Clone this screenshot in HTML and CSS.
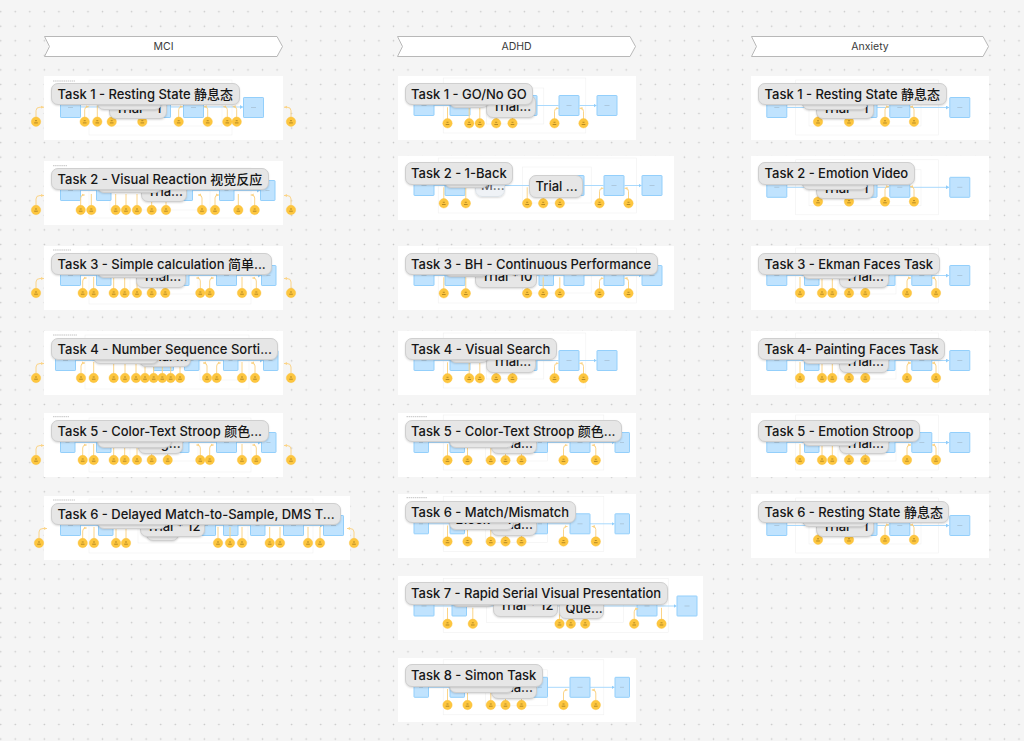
FILE: index.html
```html
<!DOCTYPE html>
<html lang="en">
<head>
<meta charset="utf-8">
<title>Task flows</title>
<link rel="stylesheet" href="styles.css">
</head>
<body>
<svg class="defs" width="0" height="0" aria-hidden="true">
  <defs>
    <marker id="ah" markerWidth="4" markerHeight="4" refX="3" refY="2" orient="auto"><path d="M0 0L3 2L0 4z" fill="#8fcdfb"/></marker>
    <marker id="ao" markerWidth="4" markerHeight="4" refX="3" refY="2" orient="auto"><path d="M0 .6L3 2L0 3.4z" fill="#fbd488"/></marker>
    <g id="B"><rect class="box" x=".5" y=".5" width="20" height="20" rx=".6"/><path class="mark" d="M8 10.500h5"/></g>
    <g id="N"><rect class="box" x=".5" y=".5" width="14.500" height="20" rx=".6"/><path class="mark" d="M5.500 10.500h4"/></g>
    <g id="face"><circle class="dot" r="4.700"/><path class="fmark" d="M-1 -1h2M-1.800 1.200h3.600"/></g>
    <g id="s"><path class="wire" d="M0 -4V-16"/><use href="#face"/></g>
    <g id="r"><path class="wire" d="M0 -4V-12Q0 -15 3 -15H4" marker-end="url(#ao)"/><use href="#face"/></g>
    <g id="l"><path class="wire" d="M0 -4V-12Q0 -15 -3 -15H-4" marker-end="url(#ao)"/><use href="#face"/></g>
    <g id="ol"><path class="wire" d="M0 -4V-11Q0 -14.500 4 -14.500H8" marker-end="url(#ao)"/><use href="#face"/></g>
    <g id="or"><path class="wire" d="M0 -4V-11Q0 -14.500 -4 -14.500H-7" marker-end="url(#ao)"/><use href="#face"/></g>

    <g id="adhd-a">
      <rect class="frame" x="442.700" y="-17" width="142.600" height="55"/>
      <rect class="frame" x="486" y="-7" width="57.300" height="36"/>
      <path class="edge" d="M433 10.500H558"/><path class="edge" d="M579 10.500H596" marker-end="url(#ah)"/>
      <use href="#B" x="413"/><use href="#B" x="449"/><use href="#B" x="516"/><use href="#B" x="558"/><use href="#B" x="596"/>
      <use href="#s" x="447" y="28.300"/><use href="#s" x="468.700" y="28.300"/><use href="#s" x="479.300" y="28.300"/><use href="#s" x="495.700" y="28.300"/><use href="#s" x="512" y="28.300"/><use href="#r" x="554" y="28.300"/><use href="#l" x="583" y="28.300"/>
    </g>
    <g id="adhd-b">
      <rect class="frame" x="442.700" y="-17" width="160.600" height="55"/>
      <rect class="frame" x="485" y="-7" width="62" height="36"/>
      <path class="edge" d="M428 10.500H569"/><path class="edge" d="M589 10.500H614" marker-end="url(#ah)"/>
      <use href="#N" x="413"/><use href="#N" x="449"/><use href="#N" x="532"/><use href="#B" x="569"/><use href="#N" x="614"/>
      <use href="#s" x="447" y="28.200"/><use href="#s" x="467" y="28.200"/><use href="#s" x="490.300" y="28.200"/><use href="#s" x="505" y="28.200"/><use href="#s" x="521" y="28.200"/><use href="#r" x="563" y="28.200"/><use href="#l" x="595.300" y="28.200"/>
    </g>
    <g id="adhd-c">
      <rect class="frame" x="437.700" y="-17" width="198.300" height="55"/>
      <rect class="frame" x="522" y="-8" width="68.700" height="36"/>
      <path class="edge" d="M433 10.500H603"/><path class="edge" d="M624 10.500H641" marker-end="url(#ah)"/>
      <use href="#B" x="413"/><use href="#B" x="444"/><use href="#N" x="538"/><use href="#B" x="563"/><use href="#B" x="603"/><use href="#B" x="641"/>
      <use href="#s" x="443.300" y="28.300"/><use href="#s" x="465.300" y="28.300"/><use href="#s" x="526.700" y="28.300"/><use href="#s" x="542.700" y="28.300"/><use href="#s" x="559.300" y="28.300"/><use href="#r" x="599" y="28.300"/><use href="#l" x="628" y="28.300"/>
    </g>
    <g id="anx-x">
      <rect class="frame" x="795.700" y="-17" width="142.600" height="55"/>
      <rect class="frame" x="809" y="-7" width="112" height="36"/>
      <path class="edge" d="M787 10.500H889"/><path class="edge" d="M910 10.500H949" marker-end="url(#ah)"/>
      <use href="#B" x="766.300"/><use href="#B" x="856.500"/><use href="#B" x="889.300"/><use href="#B" x="949.300"/>
      <use href="#s" x="818" y="24.800"/><use href="#s" x="849" y="24.800"/><use href="#r" x="885" y="24.800"/><use href="#l" x="914" y="24.800"/>
    </g>
    <g id="anx-y">
      <rect class="frame" x="795.700" y="-17" width="142.600" height="55"/>
      <rect class="frame" x="838" y="-7" width="58" height="36"/>
      <path class="edge" d="M787 10.500H911"/><path class="edge" d="M931 10.500H949" marker-end="url(#ah)"/>
      <use href="#B" x="766.300"/><use href="#N" x="804"/><use href="#N" x="880"/><use href="#B" x="911.300"/><use href="#B" x="949.300"/>
      <use href="#s" x="800" y="28"/><use href="#s" x="822" y="28"/><use href="#s" x="832.300" y="28"/><use href="#s" x="849" y="28"/><use href="#s" x="865.300" y="28"/><use href="#r" x="907" y="28"/><use href="#l" x="936" y="28"/>
    </g>
  </defs>
</svg>

<main class="canvas">

  <div class="tag" style="left:44px;width:239px"><svg class="chevron" viewBox="0 0 239 21" preserveAspectRatio="none"><polygon points=".5,.5 233,.5 238.500,10.500 233,20.500 .5,20.500 5.500,10.500"/></svg><span class="tag-text">MCI</span></div>
  <div class="tag" style="left:397px;width:239px"><svg class="chevron" viewBox="0 0 239 21" preserveAspectRatio="none"><polygon points=".5,.5 233,.5 238.500,10.500 233,20.500 .5,20.500 5.500,10.500"/></svg><span class="tag-text">ADHD</span></div>
  <div class="tag" style="left:751px;width:238px"><svg class="chevron" viewBox="0 0 239 21" preserveAspectRatio="none"><polygon points=".5,.5 233,.5 238.500,10.500 233,20.500 .5,20.500 5.500,10.500"/></svg><span class="tag-text">Anxiety</span></div>

  <!-- MCI -->
  <section class="card" style="left:44px;top:76px;width:239px">
    <svg class="flow" viewBox="44 76 239 64">
      <path class="title" d="M53 81h22"/>
      <rect class="frame" x="89" y="80" width="143" height="55"/><rect class="frame" x="110" y="90" width="112" height="36"/>
      <path class="edge" d="M81 107H243" marker-end="url(#ah)"/>
      <use href="#B" x="60" y="97"/><use href="#B" x="150" y="97"/><use href="#B" x="183" y="97"/><use href="#B" x="243" y="97"/>
      <use href="#ol" x="36" y="121.700"/><use href="#r" x="84.700" y="121.700"/><use href="#s" x="97.300" y="121.700"/><use href="#s" x="111.700" y="121.700"/><use href="#s" x="142.300" y="121.700"/><use href="#r" x="178.700" y="121.700"/><use href="#l" x="207.700" y="121.700"/><use href="#l" x="227.300" y="121.700"/><use href="#l" x="236.700" y="121.700"/><use href="#or" x="291" y="121.700"/>
    </svg>
    <span class="label" style="left:65px;top:20.500px;width:58px">Trial * 1</span>
    <span class="label" style="left:53px;top:11.500px;width:65px">Block * 1</span>
    <span class="label task">Task 1 - Resting State 静息态</span>
  </section>

  <section class="card" style="left:44px;top:161px;width:239px">
    <svg class="flow" viewBox="44 161 239 64">
      <path class="title" d="M53 165.700h14"/>
      <rect class="frame" x="89" y="168" width="162" height="50"/><rect class="frame" x="110" y="176" width="100" height="34"/>
      <path class="edge" d="M81 190.500H260" marker-end="url(#ah)"/>
      <use href="#B" x="60" y="180"/><use href="#N" x="96" y="180"/><use href="#B" x="172" y="180"/><use href="#N" x="219" y="180"/><use href="#N" x="260" y="180"/>
      <use href="#ol" x="36" y="210"/><use href="#r" x="80.700" y="210"/><use href="#s" x="91.300" y="210"/><use href="#s" x="115.700" y="210"/><use href="#s" x="126" y="210"/><use href="#s" x="137" y="210"/><use href="#s" x="151.700" y="210"/><use href="#s" x="166" y="210"/><use href="#l" x="202" y="210"/><use href="#r" x="215" y="210"/><use href="#s" x="238.300" y="210"/><use href="#l" x="254.700" y="210"/><use href="#or" x="291" y="210"/>
    </svg>
    <span class="label" style="left:97px;top:18.500px;width:46px">Tria...</span>
    <span class="label" style="left:53px;top:9.500px;width:65px">Block * 1</span>
    <span class="label task">Task 2 - Visual Reaction 视觉反应</span>
  </section>

  <section class="card" style="left:44px;top:246px;width:239px">
    <svg class="flow" viewBox="44 246 239 64">
      <path class="title" d="M53 250h18"/>
      <rect class="frame" x="89" y="250" width="162" height="54"/><rect class="frame" x="130" y="258" width="68" height="36"/>
      <path class="edge" d="M81 275.500H261" marker-end="url(#ah)"/>
      <use href="#B" x="60" y="265"/><use href="#N" x="96" y="265"/><use href="#N" x="174" y="265"/><use href="#B" x="216" y="265"/><use href="#N" x="261" y="265"/>
      <use href="#ol" x="36" y="293"/><use href="#r" x="82.700" y="293"/><use href="#s" x="93.700" y="293"/><use href="#s" x="113.700" y="293"/><use href="#s" x="124.700" y="293"/><use href="#s" x="137" y="293"/><use href="#s" x="151.700" y="293"/><use href="#s" x="165.300" y="293"/><use href="#l" x="200.300" y="293"/><use href="#r" x="209.700" y="293"/><use href="#s" x="242" y="293"/><use href="#l" x="256.300" y="293"/><use href="#or" x="291" y="293"/>
    </svg>
    <span class="label" style="left:92px;top:19px;width:50px">Trial...</span>
    <span class="label" style="left:53px;top:9.500px;width:70px">Block * 1</span>
    <span class="label task">Task 3 - Simple calculation 简单...</span>
  </section>

  <section class="card" style="left:44px;top:331px;width:239px">
    <svg class="flow" viewBox="44 331 239 64">
      <path class="title" d="M53 335h24"/>
      <rect class="frame" x="85" y="335" width="164" height="54"/><rect class="frame" x="200" y="345" width="40" height="35"/>
      <path class="edge" d="M75 360.500H263" marker-end="url(#ah)"/>
      <use href="#B" x="55" y="350"/><use href="#B" x="153" y="350"/><use href="#N" x="184" y="350"/><use href="#N" x="223" y="350"/><use href="#N" x="263" y="350"/>
      <use href="#ol" x="36" y="378"/><use href="#r" x="81" y="378"/><use href="#s" x="93.700" y="378"/><use href="#s" x="113.700" y="378"/><use href="#s" x="125" y="378"/><use href="#s" x="136" y="378"/><use href="#s" x="145" y="378"/><use href="#s" x="153.700" y="378"/><use href="#s" x="162.300" y="378"/><use href="#s" x="170.700" y="378"/><use href="#s" x="180" y="378"/><use href="#l" x="207" y="378"/><use href="#r" x="216.700" y="378"/><use href="#s" x="242" y="378"/><use href="#l" x="255" y="378"/><use href="#or" x="291" y="378"/>
    </svg>
    <span class="label" style="left:95px;top:13.800px;width:52px">Trial ...</span>
    <span class="label" style="left:49px;top:10px;width:66px">Block * 1</span>
    <span class="label task">Task 4 - Number Sequence Sorti...</span>
  </section>

  <section class="card" style="left:44px;top:413px;width:239px">
    <svg class="flow" viewBox="44 413 239 64">
      <path class="title" d="M53 416.700h16"/>
      <rect class="frame" x="89" y="418" width="162" height="54"/><rect class="frame" x="130" y="425" width="68" height="36"/>
      <path class="edge" d="M75 442.500H261" marker-end="url(#ah)"/>
      <use href="#N" x="60" y="432"/><use href="#N" x="96" y="432"/><use href="#N" x="174" y="432"/><use href="#B" x="216" y="432"/><use href="#N" x="261" y="432"/>
      <use href="#ol" x="36" y="460"/><use href="#r" x="82.700" y="460"/><use href="#s" x="93.700" y="460"/><use href="#s" x="113.700" y="460"/><use href="#s" x="124.700" y="460"/><use href="#s" x="137" y="460"/><use href="#s" x="151.700" y="460"/><use href="#s" x="167.700" y="460"/><use href="#l" x="200.300" y="460"/><use href="#r" x="209.700" y="460"/><use href="#s" x="242" y="460"/><use href="#l" x="256.300" y="460"/><use href="#or" x="291" y="460"/>
    </svg>
    <span class="label" style="left:94px;top:18.500px;width:45px">Trig...</span>
    <span class="label" style="left:53px;top:12.500px;width:75px">Block * 2</span>
    <span class="label task">Task 5 - Color-Text Stroop 颜色...</span>
  </section>

  <section class="card" style="left:44px;top:496px;width:306px">
    <svg class="flow" viewBox="44 496 306 64">
      <path class="title" d="M53 500h22"/>
      <rect class="frame" x="89" y="499" width="224" height="54"/><rect class="frame" x="138" y="507" width="110" height="36"/>
      <path class="edge" d="M81 525.500H323" marker-end="url(#ah)"/>
      <use href="#B" x="60" y="515"/><use href="#N" x="98" y="515"/><use href="#B" x="195" y="515"/><use href="#N" x="223" y="515"/><use href="#N" x="250" y="515"/><use href="#B" x="283" y="515"/><use href="#B" x="323" y="515"/>
      <use href="#ol" x="39" y="543"/><use href="#r" x="82.700" y="543"/><use href="#s" x="94" y="543"/><use href="#s" x="116" y="543"/><use href="#s" x="126" y="543"/><use href="#s" x="218" y="543"/><use href="#s" x="230" y="543"/><use href="#s" x="242" y="543"/><use href="#s" x="269.700" y="543"/><use href="#s" x="280" y="543"/><use href="#s" x="308" y="543"/><use href="#s" x="320" y="543"/><use href="#or" x="354" y="543"/>
    </svg>
    <span class="label" style="left:102px;top:22px;width:33px"></span>
    <span class="label" style="left:96px;top:18.500px;width:65px">Trial * 12</span>
    <span class="label" style="left:53px;top:10px;width:70px">Block * 1</span>
    <span class="label task">Task 6 - Delayed Match-to-Sample, DMS T...</span>
  </section>

  <!-- ADHD -->
  <section class="card" style="left:397.500px;top:76px;width:238.500px">
    <svg class="flow" viewBox="397.500 76 238.500 64"><use href="#adhd-a" y="95"/></svg>
    <span class="label" style="left:88.500px;top:19px;width:50px">Trial...</span>
    <span class="label" style="left:51.500px;top:9px;width:40px">Block</span>
    <span class="label task">Task 1 - GO/No GO</span>
  </section>

  <section class="card" style="left:397.500px;top:155.500px;width:276.500px">
    <svg class="flow" viewBox="397.500 155.500 276.500 64"><use href="#adhd-c" y="174.500"/></svg>
    <span class="label pale" style="left:77px;top:18.500px;width:30px">M...</span>
    <span class="label" style="left:131.500px;top:19.500px;width:54px">Trial ...</span>
    <span class="label" style="left:46px;top:10px;width:45px">Block</span>
    <span class="label task">Task 2 - 1-Back</span>
  </section>

  <section class="card" style="left:397.500px;top:246px;width:276.500px">
    <svg class="flow" viewBox="397.500 246 276.500 64"><use href="#adhd-c" y="265"/></svg>
    <span class="label" style="left:77.500px;top:19px;width:62px">Trial *10</span>
    <span class="label" style="left:46px;top:8.500px;width:45px">Block</span>
    <span class="label task">Task 3 - BH - Continuous Performance</span>
  </section>

  <section class="card" style="left:397.500px;top:331px;width:238.500px">
    <svg class="flow" viewBox="397.500 331 238.500 64"><use href="#adhd-a" y="350"/></svg>
    <span class="label" style="left:88.500px;top:19px;width:50px">Trial...</span>
    <span class="label" style="left:51.500px;top:9px;width:40px">Block</span>
    <span class="label task">Task 4 - Visual Search</span>
  </section>

  <section class="card" style="left:397.500px;top:413px;width:238.500px">
    <svg class="flow" viewBox="397.500 413 238.500 64"><path class="title" d="M406 416.700h21"/><use href="#adhd-b" y="432"/></svg>
    <span class="label" style="left:93.500px;top:18.800px;width:46px">Tria...</span>
    <span class="label" style="left:51.500px;top:12.800px;width:65px">Block * 4</span>
    <span class="label task">Task 5 - Color-Text Stroop 颜色...</span>
  </section>

  <section class="card" style="left:397.500px;top:494px;width:238.500px">
    <svg class="flow" viewBox="397.500 494 238.500 64"><path class="title" d="M406 497.700h21"/><use href="#adhd-b" y="513.300"/></svg>
    <span class="label" style="left:93.500px;top:19px;width:46px">Tria...</span>
    <span class="label" style="left:51.500px;top:13.500px;width:65px">Block * 4</span>
    <span class="label task">Task 6 - Match/Mismatch</span>
  </section>

  <section class="card" style="left:397.500px;top:575.500px;width:305.500px">
    <svg class="flow" viewBox="397.500 575.500 305.500 64">
      <rect class="frame" x="442.700" y="578" width="225" height="54"/><rect class="frame" x="486" y="586" width="137" height="36"/>
      <path class="edge" d="M433 605.500H636"/><path class="edge" d="M657 605.500H676" marker-end="url(#ah)"/>
      <use href="#B" x="413" y="595"/><use href="#N" x="451" y="595"/><use href="#B" x="636" y="595"/><use href="#B" x="676" y="595"/>
      <use href="#s" x="447" y="623.300"/><use href="#s" x="472.300" y="623.300"/><use href="#s" x="559" y="623.300"/><use href="#s" x="570.300" y="623.300"/><use href="#s" x="584.700" y="623.300"/><use href="#r" x="633.700" y="623.300"/><use href="#s" x="661" y="623.300"/>
    </svg>
    <span class="label" style="left:95.500px;top:18.500px;width:65px">Trial * 12</span>
    <span class="label" style="left:161.500px;top:21.300px;width:45px">Que...</span>
    <span class="label" style="left:53.500px;top:9px;width:44px">Block</span>
    <span class="label task">Task 7 - Rapid Serial Visual Presentation</span>
  </section>

  <section class="card" style="left:397.500px;top:657.500px;width:238.500px">
    <svg class="flow" viewBox="397.500 657.500 238.500 64"><use href="#adhd-b" y="676.300"/></svg>
    <span class="label" style="left:93.500px;top:18.700px;width:46px">Tria...</span>
    <span class="label" style="left:51.500px;top:13.300px;width:65px">Block * 4</span>
    <span class="label task">Task 8 - Simon Task</span>
  </section>

  <!-- Anxiety -->
  <section class="card" style="left:751px;top:76px;width:238px">
    <svg class="flow" viewBox="751 76 238 64"><use href="#anx-x" y="97"/></svg>
    <span class="label" style="left:65px;top:20.800px;width:58px">Trial * 1</span>
    <span class="label" style="left:51px;top:11.500px;width:66px">Block * 1</span>
    <span class="label task">Task 1 - Resting State 静息态</span>
  </section>

  <section class="card" style="left:751px;top:155.500px;width:238px">
    <svg class="flow" viewBox="751 155.500 238 64"><use href="#anx-x" y="176.300"/></svg>
    <span class="label" style="left:65px;top:21px;width:58px">Trial * 1</span>
    <span class="label" style="left:51px;top:11.700px;width:66px">Block * 1</span>
    <span class="label task">Task 2 - Emotion Video</span>
  </section>

  <section class="card" style="left:751px;top:246px;width:238px">
    <svg class="flow" viewBox="751 246 238 64"><use href="#anx-y" y="265"/></svg>
    <span class="label" style="left:87.700px;top:19.200px;width:50.600px">Trial...</span>
    <span class="label" style="left:51px;top:10.800px;width:55px">Block</span>
    <span class="label task">Task 3 - Ekman Faces Task</span>
  </section>

  <section class="card" style="left:751px;top:331px;width:238px">
    <svg class="flow" viewBox="751 331 238 64"><use href="#anx-y" y="350"/></svg>
    <span class="label" style="left:87.700px;top:19.200px;width:50.600px">Trial...</span>
    <span class="label" style="left:51px;top:10.800px;width:55px">Block</span>
    <span class="label task">Task 4- Painting Faces Task</span>
  </section>

  <section class="card" style="left:751px;top:413px;width:238px">
    <svg class="flow" viewBox="751 413 238 64"><use href="#anx-y" y="432"/></svg>
    <span class="label" style="left:87.700px;top:18.800px;width:50.600px">Trial...</span>
    <span class="label" style="left:51px;top:10.800px;width:55px">Block</span>
    <span class="label task">Task 5 - Emotion Stroop</span>
  </section>

  <section class="card" style="left:751px;top:494px;width:238px">
    <svg class="flow" viewBox="751 494 238 64"><use href="#anx-x" y="515"/></svg>
    <span class="label" style="left:65px;top:20.800px;width:58px">Trial * 1</span>
    <span class="label" style="left:51px;top:10.800px;width:66px">Block * 1</span>
    <span class="label task">Task 6 - Resting State 静息态</span>
  </section>

</main>
</body>
</html>
```

FILE: styles.css
```css
html, body {
  margin: 0;
  padding: 0;
  height: 100%;
  overflow: hidden;
}

.defs {
  position: absolute;
}

.canvas {
  position: relative;
  width: 1024px;
  height: 741px;
  overflow: hidden;
  background-color: #f5f5f5;
  background-image: radial-gradient(circle, #c6c6c6 0, #c6c6c6 .6px, rgba(198, 198, 198, 0) 1.1px);
  background-size: 14.55px 14.55px;
  background-position: -6.57px 4.43px;
  font-family: Inter, "Noto Sans CJK SC", sans-serif;
}

.tag {
  position: absolute;
  top: 35.5px;
  height: 21px;
  display: flex;
  align-items: center;
  justify-content: center;
}

.chevron {
  position: absolute;
  inset: 0;
  width: 100%;
  height: 100%;
}

.chevron polygon {
  fill: #fff;
  stroke: #b8b8b8;
  stroke-width: 1;
  vector-effect: non-scaling-stroke;
}

.tag-text {
  position: relative;
  font-size: 10.5px;
  color: #3a3a3a;
}

.card {
  position: absolute;
  height: 64px;
  background: #fff;
}

.flow {
  display: block;
  width: 100%;
  height: 64px;
  overflow: visible;
}

.frame {
  fill: none;
  stroke: #f0f0f0;
  stroke-width: .6;
}

.title {
  stroke: #c4c4c4;
  stroke-width: 1;
  stroke-dasharray: 1.5 .6;
  fill: none;
}

.edge {
  fill: none;
  stroke: #a9d9fd;
  stroke-width: 1;
}

.box {
  fill: #c0e3fe;
  stroke: #93cffb;
  stroke-width: 1;
}

.mark {
  stroke: #9db6c8;
  stroke-width: .6;
  fill: none;
}

.dot {
  fill: #fdc63f;
  stroke: #fbc13a;
  stroke-width: .4;
}

.fmark {
  stroke: #96701a;
  stroke-width: .7;
  fill: none;
}

.wire {
  fill: none;
  stroke: #fbd488;
  stroke-width: 1;
}

.label {
  position: absolute;
  box-sizing: border-box;
  height: 22.5px;
  padding: 0 5.5px;
  display: block;
  overflow: hidden;
  white-space: nowrap;
  background: #e6e6e6;
  border: 1px solid #cfcfcf;
  border-radius: 7px;
  box-shadow: 0 1px 2px rgba(0, 0, 0, .14);
  color: #161616;
  font-size: 13px;
  font-weight: 500;
  line-height: 20.5px;
}

.label.task {
  left: 7px;
  top: 6.5px;
}

.label.pale {
  background: rgba(236, 240, 244, .85);
  color: #666;
  border-color: #dde3e8;
}
```
